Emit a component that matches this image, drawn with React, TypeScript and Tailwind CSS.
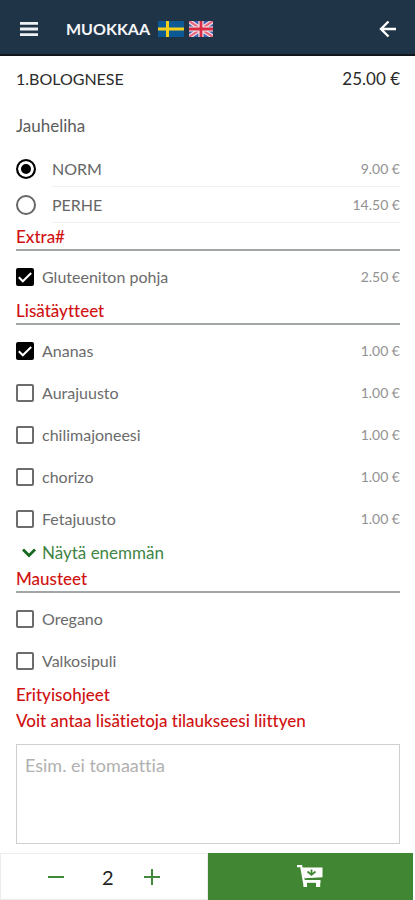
import React, { useState } from 'react';

interface Option {
  name: string;
  price?: string;
}

const sizes: Option[] = [
  { name: 'NORM', price: '9.00 €' },
  { name: 'PERHE', price: '14.50 €' },
];

const extras: Option[] = [{ name: 'Gluteeniton pohja', price: '2.50 €' }];

const toppings: Option[] = [
  { name: 'Ananas', price: '1.00 €' },
  { name: 'Aurajuusto', price: '1.00 €' },
  { name: 'chilimajoneesi', price: '1.00 €' },
  { name: 'chorizo', price: '1.00 €' },
  { name: 'Fetajuusto', price: '1.00 €' },
];

const spices: Option[] = [{ name: 'Oregano' }, { name: 'Valkosipuli' }];

const SwedishFlag: React.FC = () => (
  <svg viewBox="0 0 26 16" className="w-[26px] h-4" aria-hidden="true">
    <path fill="#0b5a96" d="M0 0h26v16H0z" />
    <path fill="#f3cf1d" d="M8 0h3v16H8zM0 6.5h26v3H0z" />
  </svg>
);

const BritishFlag: React.FC = () => (
  <svg viewBox="0 0 24 16" className="w-6 h-4" aria-hidden="true">
    <path fill="#3f62b0" d="M0 0h24v16H0z" />
    <path stroke="#f3dde4" strokeWidth="4.4" d="M0 0l24 16M24 0L0 16" />
    <path stroke="#e8667c" strokeWidth="2" d="M0 0l24 16M24 0L0 16" />
    <path fill="#f5e6ea" d="M9.4 0h5.2v16H9.4zM0 5.4h24v5.2H0z" />
    <path fill="#d92b45" d="M10.6 0h2.8v16h-2.8zM0 6.6h24v2.8H0z" />
  </svg>
);

const SectionHeading: React.FC<{ children: React.ReactNode }> = ({ children }) => (
  <h2 className="h-[27px] flex items-center border-b-2 border-[#a3a6a7] text-[17px] font-medium text-[#d01212]">
    {children}
  </h2>
);

const CheckList: React.FC<{ options: Option[]; initial?: string[] }> = ({
  options,
  initial = [],
}) => {
  const [selected, setSelected] = useState<string[]>(initial);

  const toggle = (name: string) => {
    setSelected((current) =>
      current.includes(name) ? current.filter((n) => n !== name) : [...current, name]
    );
  };

  return (
    <ul className="pt-[5px]">
      {options.map((option) => (
        <li key={option.name}>
          <label className="h-[42px] flex items-center">
            <span className="grid place-items-center mr-2">
              <input
                type="checkbox"
                checked={selected.includes(option.name)}
                onChange={() => toggle(option.name)}
                className="peer col-start-1 row-start-1 appearance-none w-[18px] h-[18px] rounded-xs border-2 border-[#6c6c6c] bg-white checked:bg-black checked:border-black"
              />
              <svg
                viewBox="0 0 18 18"
                className="col-start-1 row-start-1 w-[18px] h-[18px] pointer-events-none opacity-0 peer-checked:opacity-100"
                fill="none"
                stroke="#fff"
                strokeWidth="2"
                aria-hidden="true"
              >
                <path d="M2.8 9.3l4 4L15.2 5" />
              </svg>
            </span>
            <span className="flex-1 text-base text-[#6b6b6b]">{option.name}</span>
            {option.price && <span className="text-sm text-[#929292]">{option.price}</span>}
          </label>
        </li>
      ))}
    </ul>
  );
};

const App: React.FC = () => {
  const [size, setSize] = useState('NORM');
  const [quantity, setQuantity] = useState(2);

  return (
    <div className="bg-white font-[Lato,sans-serif] [font-variant-ligatures:none]">
      <header className="h-14 flex items-center bg-[#203447] border-b-2 border-[#10161c] pl-5 pr-[18px] pt-1">
        <button aria-label="Valikko">
          <svg viewBox="0 0 18 14" className="w-[18px] h-3.5" fill="#eef1f4" aria-hidden="true">
            <path d="M0 0h18v2.8H0zM0 5.6h18v2.8H0zM0 11.2h18V14H0z" />
          </svg>
        </button>
        <h1 className="ml-7 text-base font-bold text-[#f4f6f8]">MUOKKAA</h1>
        <button aria-label="Svenska" className="ml-2">
          <SwedishFlag />
        </button>
        <button aria-label="English" className="ml-[5px]">
          <BritishFlag />
        </button>
        <button aria-label="Takaisin" className="ml-auto">
          <svg
            viewBox="0 0 18 18"
            className="w-[18px] h-[18px]"
            fill="none"
            stroke="#fff"
            strokeWidth="2.4"
            aria-hidden="true"
          >
            <path d="M17 9H2.5M9.5 1.5L2 9l7.5 7.5" />
          </svg>
        </button>
      </header>

      <main className="pl-4 pr-[15px]">
        <div className="h-[45px] flex items-center justify-between text-[#2b2b2b]">
          <span className="text-base">1.BOLOGNESE</span>
          <span className="text-[17px]">25.00 €</span>
        </div>

        <fieldset>
          <legend className="h-[50px] flex items-center text-[17px] text-[#5c5c5c]">Jauheliha</legend>
          {sizes.map((option) => (
            <label key={option.name} className="h-9 flex items-center">
              <input
                type="radio"
                name="size"
                checked={size === option.name}
                onChange={() => setSize(option.name)}
                className="appearance-none w-5 h-5 mr-4 rounded-full border-2 border-[#666] bg-white checked:border-black checked:bg-black checked:shadow-[inset_0_0_0_3px_white]"
              />
              <span className="flex-1 h-full flex items-center justify-between border-b border-[#f0f0f0]">
                <span className="text-base text-[#666]">{option.name}</span>
                <span className="text-sm text-[#929292]">{option.price}</span>
              </span>
            </label>
          ))}
        </fieldset>

        <div className="pt-px">
          <SectionHeading>Extra#</SectionHeading>
          <CheckList options={extras} initial={['Gluteeniton pohja']} />
        </div>

        <SectionHeading>Lisätäytteet</SectionHeading>
        <CheckList options={toppings} initial={['Ananas']} />
        <button className="h-[26px] flex items-center pl-[6px] text-[17px] text-[#3f8546]">
          <svg
            viewBox="0 0 14 10"
            className="w-3.5 h-2.5 mr-[6px]"
            fill="none"
            stroke="#17691f"
            strokeWidth="2.8"
            aria-hidden="true"
          >
            <path d="M1 1.5l6 6 6-6" />
          </svg>
          Näytä enemmän
        </button>

        <SectionHeading>Mausteet</SectionHeading>
        <CheckList options={spices} />

        <label htmlFor="notes" className="block text-[17px] font-medium leading-[26px] text-[#d01212]">
          Erityisohjeet
          <br />
          Voit antaa lisätietoja tilaukseesi liittyen
        </label>
        <textarea
          id="notes"
          placeholder="Esim. ei tomaattia"
          className="block w-full h-[100px] mt-[10px] px-2 py-2 resize-none border border-[#cfcfcf] text-lg leading-6 text-[#444] placeholder:text-[#b0b0b0]"
        />
      </main>

      <footer className="mt-[9px] h-[47px] flex pr-[2px]">
        <div className="flex-1 flex items-center justify-center border border-[#ececec]">
          <button
            aria-label="Vähennä"
            className="mr-8"
            onClick={() => setQuantity(Math.max(1, quantity - 1))}
          >
            <svg viewBox="0 0 16 16" className="w-4 h-4" stroke="#418a3c" strokeWidth="2" aria-hidden="true">
              <path d="M0 8h16" />
            </svg>
          </button>
          <output className="w-6 mr-6 text-center text-xl text-[#222]">{quantity}</output>
          <button aria-label="Lisää" onClick={() => setQuantity(quantity + 1)}>
            <svg viewBox="0 0 16 16" className="w-4 h-4" stroke="#418a3c" strokeWidth="2" aria-hidden="true">
              <path d="M0 8h16M8 0v16" />
            </svg>
          </button>
        </div>
        <button aria-label="Lisää ostoskoriin" className="flex-1 flex items-center justify-center bg-[#418733]">
          <svg viewBox="0 0 26 23" className="w-[26px] h-[23px]" fill="none" aria-hidden="true">
            <path fill="#fff" d="M4.5 2.5h21v9.8L7.500 13.200z" />
            <path stroke="#fff" strokeWidth="2.2" d="M0 1.2h4.200L7 17" />
            <path fill="#fff" d="M6 15h17.500v2.800H6z" />
            <path fill="#fff" d="M6 16.500h4V22H6.500zM19 16.500h4.200V22H19z" />
            <path stroke="#418733" strokeWidth="1.8" d="M14.500 4.500v5M10.500 6.500l4 3.400 4-3.400" />
          </svg>
        </button>
      </footer>
    </div>
  );
};

export default App;
